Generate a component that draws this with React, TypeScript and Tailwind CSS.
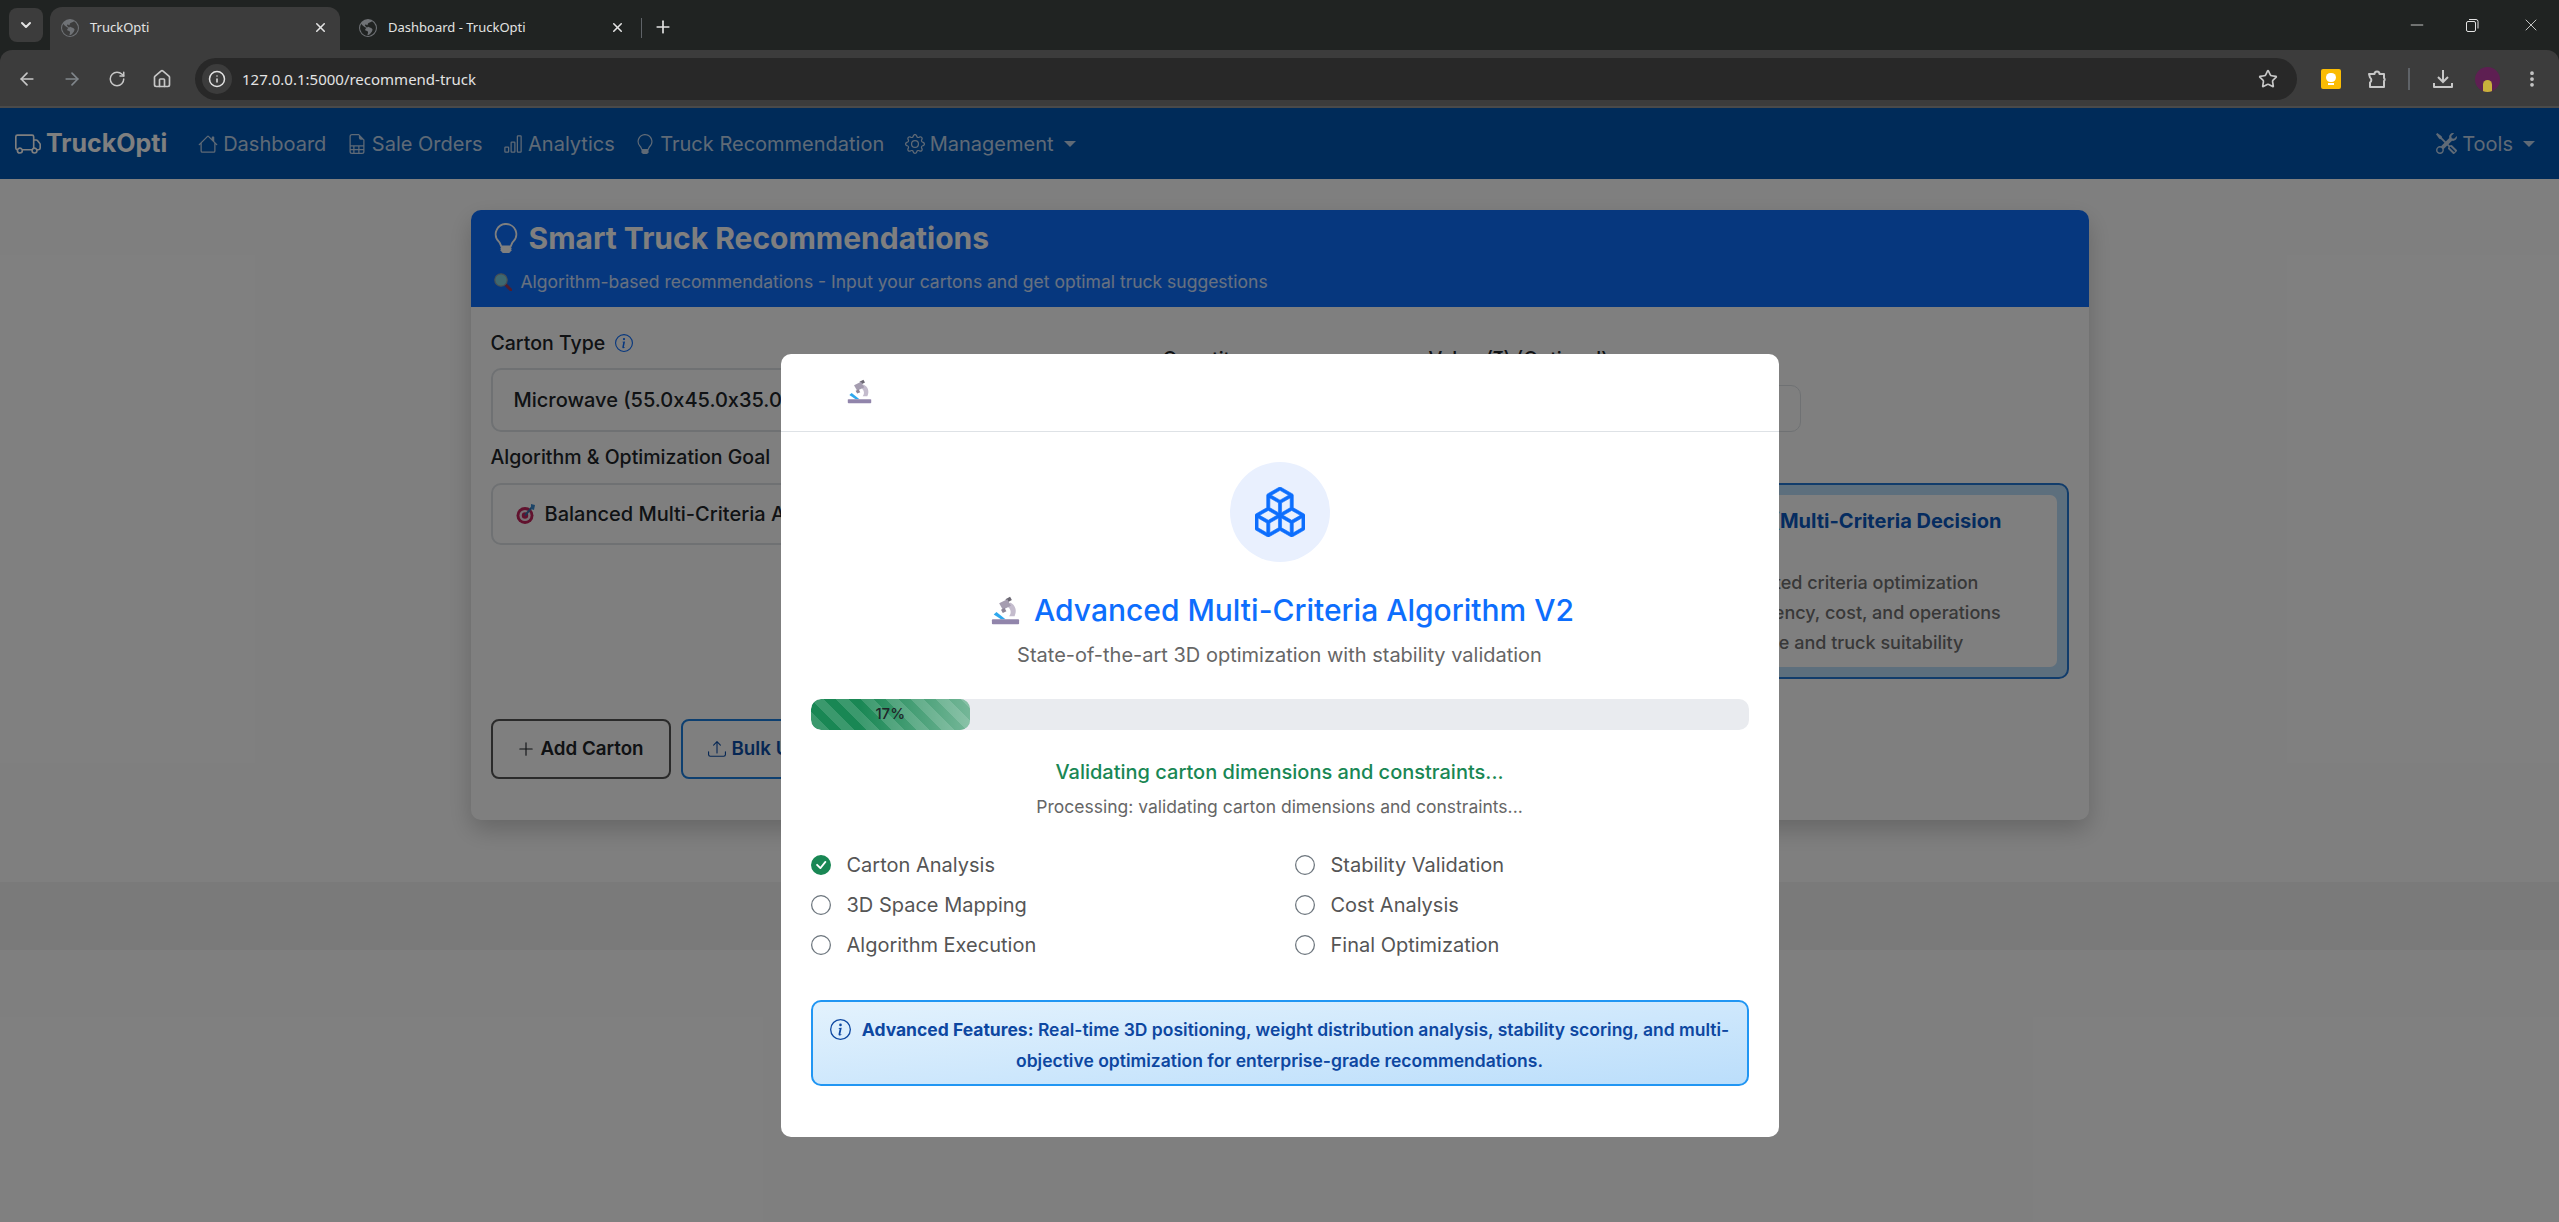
import { ArrowLeft, ArrowRight, ChevronDown, Home, Info, Minus, MoreVertical, Plus, RotateCw, Star, X } from "lucide-react";
import { BsBarChart, BsBoxes, BsCheckCircleFill, BsCircle, BsFileEarmarkSpreadsheet, BsGear, BsGlobeAmericas, BsHouse, BsInfoCircle, BsLightbulb, BsPlusLg, BsTools, BsTruck, BsUpload } from "react-icons/bs";

const steps = [
  { label: "Carton Analysis", done: true },
  { label: "Stability Validation" },
  { label: "3D Space Mapping" },
  { label: "Cost Analysis" },
  { label: "Algorithm Execution" },
  { label: "Final Optimization" },
];

function Microscope({ className }: { className: string }) {
  return (
    <svg viewBox="0 0 32 36" preserveAspectRatio="none" className={className}>
      <path d="M16 4l5-3 2 4-5 3z" fill="#6b6772" />
      <path d="M21 8c6 3 8 10 5 17h-6c3-4 2-9-2-12z" fill="#c4bccd" />
      <path d="M9 9l9-5 4 8-9 5z" fill="#a59db0" />
      <path d="M11 17l4-2 2 4-4 2z" fill="#8c8496" />
      <path d="M3 23l3-3 10 9h-5z" fill="#2ea8ee" />
      <rect x="1" y="29" width="30" height="6" rx="1" fill="#9185ab" />
    </svg>
  );
}

function Target() {
  return (
    <svg viewBox="0 0 20 22" className="h-[22px] w-[20px]">
      <circle cx="9" cy="12.5" r="8.5" fill="#c2255c" />
      <circle cx="9" cy="12.5" r="5.6" fill="#f1e3ea" />
      <circle cx="9" cy="12.5" r="3.2" fill="#c2255c" />
      <path d="M9 12.5L17 3" stroke="#3b6ea8" strokeWidth="2" />
      <path d="M15 1l4 1-1 5-3-1z" fill="#3b8bd1" />
    </svg>
  );
}

function Magnifier() {
  return (
    <svg viewBox="0 0 18 18" className="h-[18px] w-[18px]">
      <path d="M11 11l6 6" stroke="#a03a5c" strokeWidth="3" strokeLinecap="round" />
      <circle cx="7" cy="7" r="6.2" fill="#7fd0e0" stroke="#8fa0a8" strokeWidth="1.2" />
    </svg>
  );
}

function BrowserChrome() {
  return (
    <div className="bg-[#202322] font-['Noto_Sans',sans-serif] text-[#e3e3e3]">
      <div className="flex h-[50px] items-end">
        <div className="mb-[8px] ml-[9px] flex h-[34px] w-[34px] items-center justify-center rounded-lg bg-[#3c3c3c]">
          <ChevronDown className="h-4 w-4" strokeWidth={3} />
        </div>
        <div className="ml-[7px] flex h-[43px] w-[290px] items-center rounded-t-xl bg-[#3c3c3c] pb-[2px] pl-[11px] pr-[12px]">
          <BsGlobeAmericas className="h-[18px] w-[18px] text-[#6f7276]" />
          <span className="ml-[11px] flex-1 text-[13px]">TruckOpti</span>
          <X className="h-[15px] w-[15px]" strokeWidth={2.5} />
        </div>
        <div className="flex h-[43px] w-[302px] items-center pb-[2px] pl-[19px]">
          <BsGlobeAmericas className="h-[18px] w-[18px] text-[#6f7276]" />
          <span className="ml-[11px] flex-1 text-[13px]">Dashboard - TruckOpti</span>
          <X className="h-[15px] w-[15px]" strokeWidth={2.5} />
          <div className="ml-[16px] h-[20px] w-px bg-[#5f6368]" />
        </div>
        <Plus className="mb-[13px] ml-[11px] h-[20px] w-[20px]" strokeWidth={2} />
        <div className="mb-[8px] ml-auto flex h-[34px] items-center pr-[18px]">
          <Minus className="h-[20px] w-[20px]" strokeWidth={1} />
          <svg viewBox="0 0 20 20" className="ml-[35px] h-[20px] w-[20px]" fill="none" stroke="currentColor" strokeWidth="1">
            <rect x="4.5" y="6.5" width="9" height="10" rx="1.5" />
            <path d="M7 4.5h7a2 2 0 0 1 2 2v7" />
          </svg>
          <X className="ml-[39px] h-[20px] w-[20px]" strokeWidth={1} />
        </div>
      </div>
      <div className="flex h-[58px] items-start rounded-t-xl border-b-2 border-[#4a4a4a] bg-[#3c3c3c] pt-[8px]">
        <div className="flex h-[42px] w-[195px] items-center gap-[25px] pl-[17px] text-[#c7c7c7]">
          <ArrowLeft className="h-[20px] w-[20px]" />
          <ArrowRight className="h-[20px] w-[20px] text-[#80868b]" />
          <RotateCw className="h-[20px] w-[20px] p-px" />
          <Home className="h-[20px] w-[20px]" />
        </div>
        <div className="flex h-[42px] w-[2102px] items-center rounded-full bg-[#282828] pl-[7px] pr-[19px]">
          <div className="flex h-[30px] w-[30px] items-center justify-center rounded-full bg-[#3c3c3c]">
            <Info className="h-[18px] w-[18px]" />
          </div>
          <span className="ml-[10px] flex-1 text-[15px]">127.0.0.1:5000/recommend-truck</span>
          <Star className="h-[20px] w-[20px] text-[#c7c7c7]" strokeWidth={2} />
        </div>
        <div className="flex h-[42px] flex-1 items-center pl-[24px] text-[#c7c7c7]">
          <div className="flex h-[20px] w-[20px] flex-col items-center justify-center rounded-[2px] bg-[#fbbc04]">
            <div className="h-[9px] w-[10px] rounded-full bg-white" />
            <div className="mt-px h-[2px] w-[6px] bg-white" />
          </div>
          <svg viewBox="0 0 20 20" className="ml-[26px] h-[20px] w-[20px]" fill="none" stroke="currentColor" strokeWidth="2" strokeLinejoin="round">
            <path d="M2 5h5.5a2.5 2.5 0 0 1 5 0H17v4a2 2 0 0 1 0 3v6H3v-4.5a3 3 0 0 0 0-5z" />
          </svg>
          <div className="ml-[21px] h-[22px] w-[2px] bg-[#5f6368]" />
          <svg viewBox="0 0 20 20" className="ml-[23px] h-[20px] w-[20px]" fill="none" stroke="currentColor" strokeWidth="2">
            <path d="M10 1v12M5 8l5 5 5-5" />
            <path d="M1 14v4h18v-4" strokeLinejoin="round" />
          </svg>
          <div className="ml-[22px] flex h-[25px] w-[25px] items-end justify-center overflow-hidden rounded-full bg-[#5e1f52]">
            <div className="h-[12px] w-[9px] rounded-t-full bg-[#c9b03c]" />
          </div>
          <MoreVertical className="ml-[22px] h-[20px] w-[20px]" strokeWidth={2.5} />
        </div>
      </div>
    </div>
  );
}

function NavBar() {
  const link = "flex items-center gap-[5px] text-[20px] text-white/75";
  return (
    <nav className="flex h-[71px] items-center bg-[#0056b3] pl-[15px] pr-[24px]">
      <div className="flex items-center gap-[5px] text-[25px] font-bold text-white">
        <BsTruck className="h-[26px] w-[26px]" />
        TruckOpti
      </div>
      <div className="ml-[31px] flex items-center gap-[20.5px]">
        <span className={link}><BsHouse className="h-[20px] w-[20px]" />Dashboard</span>
        <span className={link}><BsFileEarmarkSpreadsheet className="h-[20px] w-[20px]" />Sale Orders</span>
        <span className={link}><BsBarChart className="h-[20px] w-[20px]" />Analytics</span>
        <span className={link}><BsLightbulb className="h-[20px] w-[20px]" />Truck Recommendation</span>
        <span className={link}>
          <BsGear className="h-[20px] w-[20px]" />Management
          <span className="ml-[5px] border-x-[6px] border-t-[6px] border-x-transparent border-t-white/75" />
        </span>
      </div>
      <span className={`${link} ml-auto`}>
        <BsTools className="h-[21px] w-[21px]" />Tools
        <span className="ml-[5px] border-x-[6px] border-t-[6px] border-x-transparent border-t-white/75" />
      </span>
    </nav>
  );
}

function RecommendCard() {
  const label = "text-[19.5px] font-medium leading-[30px] text-[#212529]";
  return (
    <div className="mx-auto mt-[31px] h-[610px] w-[1618px] rounded-[10px] bg-white shadow-[0_10px_25px_rgba(0,0,0,0.2)]">
      <div className="h-[97px] rounded-t-[10px] bg-[#0d6efd] pl-[20px] pt-[10px] text-white">
        <h2 className="flex items-center gap-[8px] text-[30px] font-bold leading-[36px]">
          <BsLightbulb className="h-[30px] w-[30px]" />
          Smart Truck Recommendations
        </h2>
        <p className="mt-[13px] flex items-center gap-[9px] pl-[3px] text-[17.5px] text-white/80">
          <Magnifier />
          Algorithm-based recommendations - Input your cartons and get optimal truck suggestions
        </p>
      </div>
      <div className="px-[20px] pt-[21px]">
        <div className="flex">
          <div className="w-[672px]">
            <label className={`flex items-center gap-[10px] ${label}`}>
              Carton Type
              <BsInfoCircle className="h-[18px] w-[18px] text-[#0d6efd]" />
            </label>
            <div className="mt-[10px] flex h-[64px] w-[640px] items-center rounded-[10px] border-2 border-[#dee2e6] px-[21px] text-[20px] font-medium text-[#212529]">
              Microwave (55.0x45.0x35.0 cm)
            </div>
          </div>
          <div className="w-[266px] pt-[16px]">
            <label className={label}>Quantity</label>
          </div>
          <div className="w-[372px] pt-[16px]">
            <label className={label}>Value (₹) (Optional)</label>
            <div className="mt-[11px] h-[47px] rounded-[10px] border border-[#dee2e6]" />
          </div>
        </div>
        <div className="mt-[10px] flex h-[237px] justify-between">
          <div className="w-[640px]">
            <label className={label}>Algorithm &amp; Optimization Goal</label>
            <div className="mt-[11px] flex h-[62px] items-center gap-[9px] rounded-[10px] border-2 border-[#dee2e6] px-[23px] text-[20px] font-medium text-[#212529]">
              <Target />
              Balanced Multi-Criteria Algorithm
            </div>
          </div>
          <div className="mt-[41px] h-[196px] w-[672px] rounded-[10px] border-2 border-[#2379d6] bg-[#bbdefb] p-[10px]">
            <div className="h-full rounded-[7px] bg-white pl-[230px] pr-[12px] pt-[11px]">
              <h3 className="pl-[9px] text-[20px] font-bold leading-[30px] text-[#0a58c0]">Uses MCDM (Multi-Criteria Decision Making)</h3>
              <ul className="mt-[2px] text-[18px] font-medium leading-[30px] text-[#707070]">
                <li>Balanced weighted criteria optimization</li>
                <li>Considers efficiency, cost, and operations</li>
                <li>Best in mixed use and truck suitability</li>
              </ul>
            </div>
          </div>
        </div>
        <div className="mt-[40px] flex gap-[10px]">
          <button className="flex h-[60px] w-[180px] items-center justify-center gap-[5px] rounded-[8px] border-[2px] border-[#555] text-[18.75px] font-semibold text-[#212529]">
            <BsPlusLg className="h-[18px] w-[18px]" />
            Add Carton
          </button>
          <button className="flex h-[60px] items-center gap-[6px] rounded-[8px] border-[2px] border-[#1a7fe0] px-[25px] text-[18.75px] font-semibold text-[#0d4fa8]">
            <BsUpload className="h-[18px] w-[18px]" />
            Bulk Upload
          </button>
        </div>
      </div>
    </div>
  );
}

function ProgressModal() {
  return (
    <div className="absolute inset-0 flex justify-center bg-black/50 pt-[246px]">
      <div className="h-[783px] w-[998px] rounded-[10px] bg-white">
        <div className="h-[78px] border-b border-[#dee2e6] pl-[66px] pt-[25px]">
          <Microscope className="h-[25px] w-[25px]" />
        </div>
        <div className="px-[30px] pt-[30px]">
          <div className="flex h-[100px] w-full justify-center">
            <div className="flex h-[100px] w-[100px] items-center justify-center rounded-full bg-[#e9f0fe]">
              <BsBoxes className="h-[50px] w-[50px] stroke-current stroke-[0.2px] text-[#0d6efd]" />
            </div>
          </div>
          <h3 className="ml-[6px] mt-[30px] flex items-center justify-center gap-[14px] text-[30px] font-medium leading-[36px] text-[#0d6efd]">
            <Microscope className="h-[29px] w-[29px]" />
            Advanced Multi-Criteria Algorithm V2
          </h3>
          <p className="mt-[12px] text-center text-[20px] leading-[30px] text-[#666]">State-of-the-art 3D optimization with stability validation</p>
          <div className="relative mt-[29px] h-[31px] overflow-hidden rounded-[10px] bg-[#e9ebef]">
            <div className="relative flex h-full w-[17%] items-center justify-center overflow-hidden rounded-[10px] bg-[#198754] bg-[linear-gradient(45deg,rgba(255,255,255,0.15)_25%,transparent_25%,transparent_50%,rgba(255,255,255,0.15)_50%,rgba(255,255,255,0.15)_75%,transparent_75%,transparent)] bg-[length:25px_25px]">
              <div className="absolute inset-0 bg-gradient-to-r from-transparent from-30% to-white/40" />
              <span className="relative text-[15px] font-medium text-[#212529]">17%</span>
            </div>
          </div>
          <p className="mt-[27px] text-center text-[20px] font-medium leading-[30px] text-[#198754]">Validating carton dimensions and constraints...</p>
          <p className="mt-[6px] text-center text-[17.5px] leading-[27px] text-[#666]">Processing: validating carton dimensions and constraints...</p>
          <div className="mt-[30px] grid grid-cols-2 gap-x-[30px] gap-y-[10px]">
            {steps.map((step) => (
              <div key={step.label} className="flex h-[30px] items-center gap-[16px] text-[20px] text-[#555]">
                {step.done ? (
                  <BsCheckCircleFill className="h-[20px] w-[20px] text-[#198754]" />
                ) : (
                  <BsCircle className="h-[20px] w-[20px] text-[#6c757d]" />
                )}
                {step.label}
              </div>
            ))}
          </div>
          <div className="mt-[40px] rounded-[10px] border-2 border-[#2196f3] bg-gradient-to-br from-[#e3f2fd] to-[#bbdefb] px-[16px] pb-[8px] pt-[12px] text-center text-[17.5px] font-semibold leading-[31px] text-[#0d47a1]">
            <BsInfoCircle className="mr-[11px] inline h-[21px] w-[21px] -translate-y-[2px]" />
            <strong className="font-bold">Advanced Features:</strong> Real-time 3D positioning, weight distribution analysis, stability scoring, and multi-objective optimization for enterprise-grade recommendations.
          </div>
        </div>
      </div>
    </div>
  );
}

export default function App() {
  return (
    <div className="flex h-[1222px] flex-col overflow-hidden bg-white font-['Inter',sans-serif]">
      <BrowserChrome />
      <div className="relative flex-1">
        <NavBar />
        <RecommendCard />
        <div className="mt-[62px] h-[68px] bg-[#f5f5f5]" />
        <ProgressModal />
      </div>
    </div>
  );
}
